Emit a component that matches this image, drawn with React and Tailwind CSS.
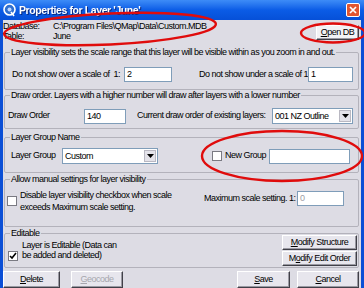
import React from 'react';

function Field({ children, className = '', muted = false }) {
  return (
    <div
      className={`h-[15px] bg-white border border-[#7f9db9] px-[2px] leading-[13px] ${
        muted ? 'text-[#9c9ca4]' : 'text-black'
      } ${className}`}
    >
      {children}
    </div>
  );
}

function Combo({ value, className = '' }) {
  return (
    <div className={`h-[16px] flex bg-white border border-[#7f9db9] ${className}`}>
      <span className="flex-1 px-[2px] leading-[14px]">{value}</span>
      <span className="w-[12px] m-[1px] bg-[#e4e3ea] border border-[#b9b8c2] flex items-center justify-center">
        <svg width="7" height="4" viewBox="0 0 7 4">
          <path d="M0 0h7L3.5 4z" fill="#000" />
        </svg>
      </span>
    </div>
  );
}

function Check({ checked = false }) {
  return (
    <span className="w-[10px] h-[10px] shrink-0 bg-white border border-[#7a7a82] flex items-center justify-center">
      {checked && (
        <svg width="8" height="8" viewBox="0 0 8 8">
          <path d="M1 4l2 2 4-5" stroke="#000" strokeWidth="1.6" fill="none" />
        </svg>
      )}
    </span>
  );
}

function Btn({ children, className = '', disabled = false }) {
  return (
    <div
      className={`flex items-center justify-center whitespace-nowrap bg-[#e7e6ed] border border-t-white border-l-white border-r-[#404048] border-b-[#404048] shadow-[inset_-1px_-1px_0_#9a99a2] ${
        disabled ? 'text-[#a6a6ae]' : 'text-black'
      } ${className}`}
    >
      {children}
    </div>
  );
}

function Group({ title, className = '', children }) {
  return (
    <fieldset className={`border border-[#b3b2bb] rounded-[2px] ${className}`}>
      <legend className="ml-[5px] px-[1px] leading-[10px] whitespace-nowrap">{title}</legend>
      {children}
    </fieldset>
  );
}

export default function App() {
  return (
    <div className="relative w-[364px] h-[288px] overflow-hidden bg-[#0b4fd6] flex flex-col font-['Liberation_Sans',Arial,sans-serif] text-[9px] tracking-[-0.5px] text-black whitespace-nowrap">
      {/* title bar */}
      <div className="h-[20px] shrink-0 flex items-center pl-[3px] pr-[4px] bg-gradient-to-b from-[#3d8cf7] via-[#0b5ce6] to-[#0650d8]">
        <svg width="13" height="14" viewBox="0 0 13 14">
          <circle cx="6.5" cy="6.5" r="5.5" fill="#2f6fd0" stroke="#fff" strokeWidth="1.6" />
          <path d="M8 9l3 4" stroke="#fff" strokeWidth="1.6" />
          <circle cx="6.5" cy="6.5" r="2" fill="#bcd6ff" />
        </svg>
        <span className="ml-[3px] text-white font-bold text-[10.5px] tracking-[-0.4px] leading-none drop-shadow-[1px_1px_0_#0a2a80]">
          Properties for Layer 'June'
        </span>
        <div className="ml-auto w-[14px] h-[14px] rounded-[2px] border border-white bg-[#e2552f] flex items-center justify-center">
          <svg width="8" height="8" viewBox="0 0 8 8">
            <path d="M1 1l6 6M7 1L1 7" stroke="#fff" strokeWidth="1.7" />
          </svg>
        </div>
      </div>

      {/* body */}
      <div className="flex-1 mx-[3px] mb-[3px] bg-[#dddce4] flex flex-col pr-[2px]">
        <div className="h-[27px] shrink-0 flex">
          <div className="pt-[1px] leading-[10px]">
            <div className="flex">
              <span className="w-[50px]">Database:</span>
              <span>C:\Program Files\QMap\Data\Custom.MDB</span>
            </div>
            <div className="flex">
              <span className="w-[50px]">Table:</span>
              <span>June</span>
            </div>
          </div>
          <Btn className="ml-auto mt-[5px] w-[43px] h-[15px] bg-[#f2f2f5]">
            <span>
              <u>O</u>pen DB
            </span>
          </Btn>
        </div>

        <Group
          className="h-[43px] ml-[1px]"
          title="Layer visibility sets the scale range that this layer will be visible within as you zoom in and out."
        >
          <div className="flex items-center mt-[10px] pl-[7px]">
            <span className="w-[112px]">Do not show over a scale of&nbsp; 1:</span>
            <Field className="w-[48px]">2</Field>
            <span className="ml-[27px] w-[109px]">Do not show under a scale of 1:</span>
            <Field className="w-[45px]">1</Field>
          </div>
        </Group>

        <Group
          className="h-[39px] ml-[1px]"
          title="Draw order. Layers with a higher number will draw after layers with a lower number"
        >
          <div className="flex items-center mt-[8px] pl-[3px]">
            <span className="w-[76px]">Draw Order</span>
            <Field className="w-[42px]">140</Field>
            <span className="ml-[11px] w-[135px]">Current draw order of existing layers:</span>
            <Combo className="w-[81px]" value="001 NZ Outline" />
          </div>
        </Group>

        <Group className="h-[41px] ml-[1px] mt-[3px]" title="Layer Group Name">
          <div className="flex items-center mt-[6px] pl-[6px]">
            <span className="w-[51px]">Layer Group</span>
            <Combo className="w-[96px]" value="Custom" />
            <span className="ml-[54px]">
              <Check />
            </span>
            <span className="ml-[3px] w-[44px]">New Group</span>
            <Field className="w-[81px]" />
          </div>
        </Group>

        <Group className="h-[53px] ml-[1px] mt-[1px]" title="Allow manual settings for layer visibility">
          <div className="flex mt-[5px] pl-[2px]">
            <span className="mt-[7px]">
              <Check />
            </span>
            <div className="ml-[3px] w-[184px] leading-[12px]">
              Disable layer visibility checkbox when scale
              <br />
              exceeds Maximum scale setting.
            </div>
            <span className="mt-[3px] w-[93px]">Maximum scale setting. 1:</span>
            <Field className="w-[47px] mt-[2px] h-[13px] leading-[11px]" muted>
              0
            </Field>
          </div>
        </Group>

        <Group className="h-[40px] ml-[1px] mt-[1px]" title="Editable">
          <div className="flex pl-[3px]">
            <span className="mt-[13px]">
              <Check checked />
            </span>
            <div className="ml-[4px] mt-[3px] leading-[9.5px]">
              Layer is Editable (Data can
              <br />
              be added and deleted)
            </div>
            <div className="ml-auto mr-[1px] -mt-[3px] flex flex-col gap-[1px]">
              <Btn className="w-[75px] h-[15px]">
                <span>
                  <u>M</u>odify Structure
                </span>
              </Btn>
              <Btn className="w-[75px] h-[15px]">
                <span>
                  M<u>o</u>dify Edit Order
                </span>
              </Btn>
            </div>
          </div>
        </Group>

        <div className="flex mt-[3px] h-[17px]">
          <Btn className="w-[57px]">
            <span>
              <u>D</u>elete
            </span>
          </Btn>
          <Btn className="w-[52px] ml-[11px]" disabled>
            <span>
              <u>G</u>eocode
            </span>
          </Btn>
          <Btn className="w-[53px] ml-auto">
            <span>
              <u>S</u>ave
            </span>
          </Btn>
          <Btn className="w-[62px] ml-[7px]">
            <span>
              <u>C</u>ancel
            </span>
          </Btn>
        </div>
      </div>

      {/* red annotation ellipses */}
      <svg className="absolute inset-0 pointer-events-none" width="364" height="288" viewBox="0 0 364 288">
        <g fill="none" stroke="#e00c0c" strokeWidth="2.4">
          <ellipse cx="110" cy="29" rx="106" ry="15.5" transform="rotate(-2.7 110 29)" />
          <ellipse cx="333" cy="33" rx="32" ry="9.5" />
          <ellipse cx="282" cy="156" rx="80" ry="25" />
        </g>
      </svg>
    </div>
  );
}
